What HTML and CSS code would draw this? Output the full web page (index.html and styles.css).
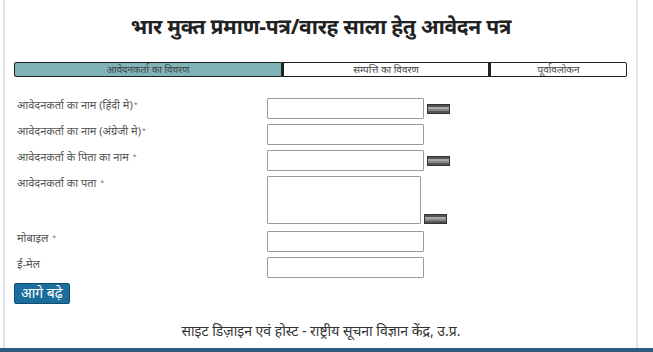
FILE: index.html
```html
<!DOCTYPE html>
<html lang="hi">
<head>
    <meta charset="UTF-8">
    <meta name="viewport" content="width=device-width, initial-scale=1.0">
    <title>भार मुक्त प्रमाण-पत्र</title>
    <link rel="stylesheet" href="styles.css">
</head>
<body>
    <div class="page">
        <h2 class="title">भार मुक्त प्रमाण-पत्र/वारह साला हेतु आवेदन पत्र</h2>

        <div class="tabs">
            <div class="tab tab-active">आवेदनकर्ता का विवरण</div>
            <div class="tab tab-mid">सम्पत्ति का विवरण</div>
            <div class="tab tab-last">पूर्वावलोकन</div>
        </div>

        <form class="form" id="applicantForm">
            <label class="label" for="nameHi">आवेदनकर्ता का नाम (हिंदी मे)<span class="req">*</span></label>
            <div class="field">
                <input type="text" id="nameHi" class="input">
                <span class="kbd"></span>
            </div>

            <label class="label" for="nameEn">आवेदनकर्ता का नाम (अंग्रेजी मे)<span class="req">*</span></label>
            <div class="field">
                <input type="text" id="nameEn" class="input">
            </div>

            <label class="label" for="father">आवेदनकर्ता के पिता का नाम <span class="req">*</span></label>
            <div class="field">
                <input type="text" id="father" class="input">
                <span class="kbd"></span>
            </div>

            <label class="label" for="address">आवेदनकर्ता का पता <span class="req">*</span></label>
            <div class="field field-bottom">
                <textarea id="address" class="textarea"></textarea>
                <span class="kbd"></span>
            </div>

            <label class="label label-gap" for="mobile">मोबाइल <span class="req">*</span></label>
            <div class="field field-gap">
                <input type="text" id="mobile" class="input">
            </div>

            <label class="label" for="email">ई-मेल</label>
            <div class="field">
                <input type="text" id="email" class="input">
            </div>

            <div class="actions">
                <button type="submit" class="next-button">आगे बढ़े</button>
            </div>
        </form>

        <div class="footer">साइट डिज़ाइन एवं होस्ट - राष्ट्रीय सूचना विज्ञान केंद्र, उ.प्र.</div>
    </div>
    <div class="bottom-bar"></div>
</body>
</html>
```

FILE: styles.css
```css
body {
    margin: 0;
    font-family: "Noto Sans", "DejaVu Sans", sans-serif;
    background-color: #fff;
    color: #333;
}
.page {
    margin: 0 15px 0 3px;
    height: 348px;
    border-left: 2px solid #e2e2e2;
    border-right: 2px solid #e2e2e2;
    box-sizing: border-box;
    padding: 0 8px 0 9px;
}
.title {
    margin: 0;
    padding-top: 12px;
    font-size: 21px;
    line-height: 28px;
    text-align: center;
    color: #222;
    font-weight: bold;
    letter-spacing: -0.3px;
}
.tabs {
    display: flex;
    margin-top: 22px;
    height: 15px;
}
.tab {
    border: 1px solid #222;
    font-size: 10px;
    line-height: 13px;
    text-align: center;
    color: #444;
    background-color: #fff;
    box-sizing: border-box;
}
.tab-active {
    width: 268px;
    background-color: #7fb3b8;
    border-radius: 2px 0 0 2px;
}
.tab-mid {
    width: 207px;
    border-left-width: 2px;
}
.tab-last {
    width: 138px;
    border-left-width: 2px;
    border-radius: 0 2px 2px 0;
}
.form {
    display: grid;
    grid-template-columns: 250px 1fr;
    row-gap: 5px;
    margin-top: 21px;
    padding-left: 3px;
}
.label {
    font-size: 11px;
    line-height: 14px;
    color: #555;
}
.req {
    font-size: 7px;
    vertical-align: top;
    color: #777;
    margin-left: 1px;
}
.field {
    display: flex;
    align-items: center;
    gap: 3px;
}
.field-bottom {
    align-items: flex-end;
}
.label-gap, .field-gap {
    margin-top: 2px;
}
.input {
    width: 157px;
    height: 21px;
    box-sizing: border-box;
    border: 1px solid #9a9a9a;
    border-radius: 1px;
    padding: 2px 4px;
    margin: 0;
}
.textarea {
    width: 154px;
    height: 48px;
    box-sizing: border-box;
    border: 1px solid #9a9a9a;
    border-radius: 1px;
    resize: none;
    margin: 0;
}
.kbd {
    display: inline-block;
    width: 21px;
    height: 8px;
    background-color: #888;
    border: 1px solid #333;
    box-shadow: inset 0 2px 0 #555, inset 0 4px 0 #aaa, inset 0 -2px 0 #555;
}
.actions {
    grid-column: 1 / 3;
    margin-top: -2px;
}
.next-button {
    padding: 0 6px;
    height: 21px;
    margin-left: -3px;
    background-color: #1b6d9b;
    color: #fff;
    border: 1px solid #0f4f77;
    border-radius: 2px;
    font-family: "Noto Sans", "DejaVu Sans", sans-serif;
    font-size: 14px;
    line-height: 18px;
    cursor: pointer;
}
.footer {
    margin-top: 17px;
    text-align: center;
    font-size: 14px;
    color: #333;
}
.bottom-bar {
    height: 4px;
    background-color: #2c5b7f;
}
```
